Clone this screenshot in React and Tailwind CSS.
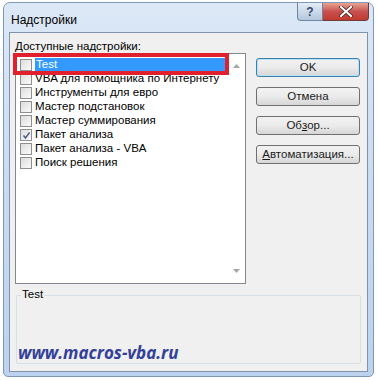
import React from 'react';

const font = { fontFamily: '"Liberation Sans", "Noto Sans", sans-serif' };

const items = [
    { name: 'Test', selected: true },
    { name: 'VBA для помощника по Интернету' },
    { name: 'Инструменты для евро' },
    { name: 'Мастер подстановок' },
    { name: 'Мастер суммирования' },
    { name: 'Пакет анализа', checked: true },
    { name: 'Пакет анализа - VBA' },
    { name: 'Поиск решения' },
];

function CheckBox({ checked }) {
    return (
        <div className="w-[12px] h-[12px] border border-[#8e8f8f] bg-gradient-to-br from-[#dcdcdc] to-[#fbfbfb] flex items-center justify-center shrink-0">
            {checked && (
                <svg width="9" height="9" viewBox="0 0 9 9">
                    <path d="M1.5 4.5 L3.5 7 L7.5 1.5" fill="none" stroke="#4a5a8a" strokeWidth="1.4" />
                </svg>
            )}
        </div>
    );
}

function Button({ children, primary }) {
    return (
        <div
            className={`h-[19px] w-[104px] rounded-[3px] border flex items-center justify-center text-[11.5px] text-[#1b1b1b] whitespace-nowrap bg-gradient-to-b from-[#f2f2f2] via-[#ebebeb] to-[#d6d6d6] ${
                primary ? 'border-[#3c7fb1] shadow-[inset_0_0_0_1px_#b9e3f7]' : 'border-[#707070]'
            }`}
        >
            {children}
        </div>
    );
}

export default function App() {
    return (
        <div className="w-[378px] h-[381px] bg-white pt-[2px] pl-[3px]" style={font}>
            <div className="w-[371px] h-[375px] rounded-t-[7px] rounded-b-[5px] border border-[#7f98b8] bg-gradient-to-b from-[#dce8f6] via-[#c9dbf1] to-[#bcd2ee] flex flex-col">
                {/* title bar */}
                <div className="h-[29px] flex items-start">
                    <div className="pl-[7px] pt-[10px] text-[12px] text-black leading-[14px]">Надстройки</div>
                    <div className="ml-auto mr-[4px] flex">
                        <div className="w-[26px] h-[18px] rounded-bl-[4px] border border-t-0 border-[#6f86a3] bg-gradient-to-b from-[#e4ecf5] to-[#b4c7de] flex items-center justify-center text-[12px] font-bold text-[#34496b] leading-none">
                            ?
                        </div>
                        <div className="w-[46px] h-[18px] rounded-br-[4px] border border-t-0 border-l-0 border-[#6e3b3b] bg-gradient-to-b from-[#e8a493] via-[#c75050] to-[#c23a2c] flex items-center justify-center">
                            <svg width="14" height="11" viewBox="0 0 14 11">
                                <path d="M2 1 L12 10 M12 1 L2 10" stroke="#3b1f1f" strokeWidth="3.6" strokeLinecap="round" />
                                <path d="M2 1 L12 10 M12 1 L2 10" stroke="#ffffff" strokeWidth="2.2" strokeLinecap="round" />
                            </svg>
                        </div>
                    </div>
                </div>
                {/* client */}
                <div className="mx-[5px] mb-[4px] flex-1 border border-[#8193ab] bg-[#f0f0f0] flex flex-col">
                    <div className="flex pl-[5px] pt-[6px]">
                        <div className="flex flex-col">
                            <div className="text-[11.5px] leading-[14px] text-black h-[14px] whitespace-nowrap">
                                <span className="underline">Д</span>оступные надстройки:
                            </div>
                            <div className="relative w-[231px] h-[231px] border border-[#828790] bg-white flex">
                                <div className="flex-1 flex flex-col pt-[4px]">
                                    {items.map((it) => (
                                        <div key={it.name} className="h-[14px] flex items-center pl-[4px]">
                                            <CheckBox checked={it.checked} />
                                            <div
                                                className={`ml-[3px] h-[14px] flex items-center text-[11.5px] leading-none whitespace-nowrap ${
                                                    it.selected ? 'flex-1 bg-[#3399ff] text-white pl-[1px]' : 'text-black'
                                                }`}
                                            >
                                                {it.name}
                                            </div>
                                        </div>
                                    ))}
                                </div>
                                <div className="w-[17px] flex flex-col justify-between items-center py-[10px]">
                                    <svg width="7" height="4" viewBox="0 0 7 4">
                                        <path d="M0 4 L3.5 0 L7 4 Z" fill="#a5a5a5" />
                                    </svg>
                                    <svg width="7" height="4" viewBox="0 0 7 4">
                                        <path d="M0 0 L3.5 4 L7 0 Z" fill="#a5a5a5" />
                                    </svg>
                                </div>
                                <div className="absolute left-[-3px] top-[-1px] w-[216px] h-[22px] border-[4px] border-[#e0202c]" />
                            </div>
                        </div>
                        <div className="ml-[10px] pt-[19px] flex flex-col gap-[10px]">
                            <Button primary>OK</Button>
                            <Button>Отмена</Button>
                            <Button>
                                Об<span className="underline">з</span>ор...
                            </Button>
                            <Button>
                                <span className="underline">А</span>втоматизация...
                            </Button>
                        </div>
                    </div>
                    {/* description group */}
                    <div className="relative mx-[6px] mt-[11px] h-[69px] border border-[#d5dfe5] rounded-[2px]">
                        <div className="absolute left-[4px] top-[-9px] px-[1px] bg-[#f0f0f0] text-[11.5px] leading-[14px] text-black">Test</div>
                        <div
                            className="absolute left-[1px] bottom-[2px] text-[17px] font-bold italic text-[#33409a] leading-none"
                            style={{ fontFamily: '"Open Sans", "Noto Sans", sans-serif' }}
                        >
                            www.macros-vba.ru
                        </div>
                    </div>
                </div>
            </div>
        </div>
    );
}
